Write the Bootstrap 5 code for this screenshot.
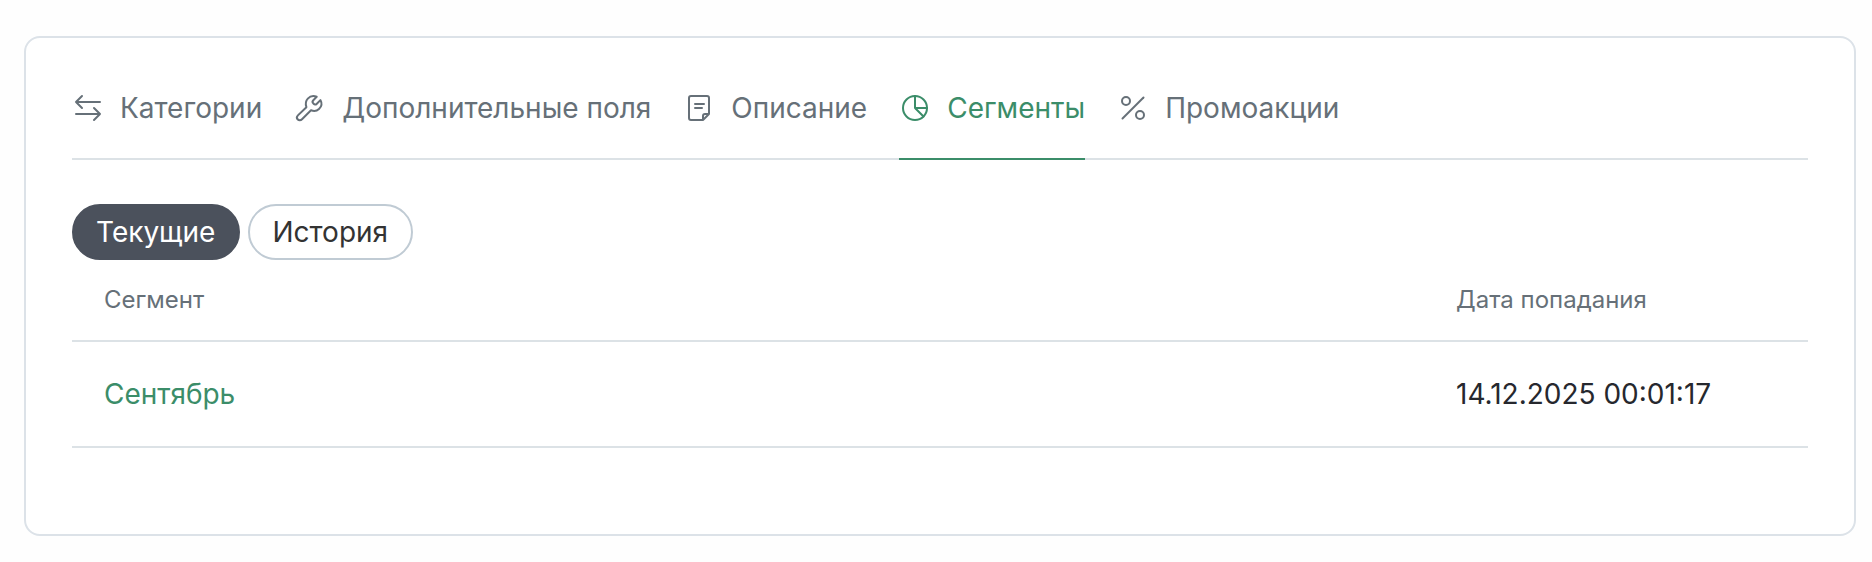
<!DOCTYPE html>
<html lang="ru">
<head>
<meta charset="utf-8">
<meta name="viewport" content="width=device-width, initial-scale=1">
<title>Сегменты</title>
<link href="https://cdn.jsdelivr.net/npm/bootstrap@5.3.0/dist/css/bootstrap.min.css" rel="stylesheet">
<style>
  body { font-family: Inter, "Liberation Sans", sans-serif; font-size: 28px; line-height: 40px; color: #26282e; background: #fefefe; }
  .page { padding: 36px 16px 24px 24px; }
  .panel { --bs-card-border-color: #dce2e8; --bs-card-border-width: 2px; --bs-card-border-radius: 16px; --bs-card-inner-border-radius: 14px; --bs-card-bg: #fff; }
  .panel-content { padding: 46px 46px 86px; }
  .tabs { gap: 0 32px; box-shadow: inset 0 -2px #dce2e6; margin-bottom: 44px; }
  .tabs .nav-link { display: flex; align-items: center; gap: 16px; padding: 0 0 26px; line-height: 48px; color: #667078; border-bottom: 2px solid transparent; }
  .tabs .nav-link:hover, .tabs .nav-link.active { color: #3b8d69; }
  .tabs .nav-link.active { border-color: #3b8d69; }
  .icon { width: 32px; height: 32px; flex: none; fill: none; stroke: currentColor; stroke-width: 2; stroke-linecap: round; stroke-linejoin: round; }
  .pill { padding: 6px 23px 6px 22px; font-size: 28px; line-height: 40px; --bs-btn-border-width: 2px; --bs-btn-color: #333; --bs-btn-border-color: #c0cbd4; --bs-btn-hover-border-color: #4b515c; --bs-btn-active-bg: #4b515c; --bs-btn-active-border-color: #4b515c; --bs-btn-active-color: #fff; }
  .segments { --bs-table-bg: transparent; --bs-table-color: #26282e; --bs-border-width: 2px; border-color: #dce2e6; }
  .segments > :not(caption) > * > * { padding: 32px; border-bottom-width: 2px; }
  .segments > thead > tr > th { padding: 22px 32px; font-size: 24px; line-height: 36px; font-weight: 400; color: #667078; }
  .segments a { color: #3b8d69; }
  .date-col { width: 384px; }
</style>
</head>
<body>
<main class="page">
  <section class="card panel">
    <div class="card-body panel-content">
      <nav class="nav tabs" aria-label="Разделы">
        <a class="nav-link" href="#categories">
          <svg class="icon" viewBox="0 0 32 32" aria-hidden="true"><path d="M28 10H4M10 4l-6 6 6 6M4 22h24M22 16l6 6-6 6"/></svg>
          Категории
        </a>
        <a class="nav-link" href="#fields">
          <svg class="icon" viewBox="0 0 32 32" aria-hidden="true"><path d="M22.7 4.8 19.3 8.2C18.4 9.1 18.4 10.5 19.3 11.4 20.2 12.8 21.7 12.9 22.6 12L26.4 8.1C28.1 11.2 27.5 14.8 25 17.1 22.8 19.1 19.8 19.4 17 18.3L8 27.3C6.7 28.6 4.8 28.5 3.8 27.5 2.6 26.3 2.7 24.6 3.9 23.4L12.4 15.2C11.3 12 11.7 9 13.8 6.7 16.1 4.2 19.6 3.6 22.7 4.8Z"/></svg>
          Дополнительные поля
        </a>
        <a class="nav-link" href="#description">
          <svg class="icon" viewBox="0 0 32 32" aria-hidden="true"><path d="M8 4h16a2 2 0 0 1 2 2v16l-6 6H8a2 2 0 0 1-2-2V6a2 2 0 0 1 2-2ZM12 12h9M12 16h7M20 28v-4a2 2 0 0 1 2-2h4"/></svg>
          Описание
        </a>
        <a class="nav-link active" href="#segments" aria-current="page">
          <svg class="icon" viewBox="0 0 32 32" aria-hidden="true"><circle cx="16" cy="16" r="12"/><path d="M16 4v12h12M16 16l8.5 8.5"/></svg>
          Сегменты
        </a>
        <a class="nav-link" href="#promo">
          <svg class="icon" viewBox="0 0 32 32" aria-hidden="true"><circle cx="9" cy="9" r="4"/><circle cx="23" cy="23" r="4"/><path d="M26.5 5.5l-21 21"/></svg>
          Промоакции
        </a>
      </nav>
      <div class="d-flex flex-wrap gap-2">
        <button type="button" class="btn rounded-pill pill active" aria-pressed="true">Текущие</button>
        <button type="button" class="btn rounded-pill pill" aria-pressed="false">История</button>
      </div>
      <table class="table segments mb-0">
        <thead>
          <tr><th scope="col">Сегмент</th><th scope="col" class="date-col">Дата попадания</th></tr>
        </thead>
        <tbody>
          <tr><td><a class="text-decoration-none" href="#september">Сентябрь</a></td><td>14.12.2025 00:01:17</td></tr>
        </tbody>
      </table>
    </div>
  </section>
</main>
<script src="https://cdn.jsdelivr.net/npm/bootstrap@5.3.0/dist/js/bootstrap.bundle.min.js"></script>
</body>
</html>
